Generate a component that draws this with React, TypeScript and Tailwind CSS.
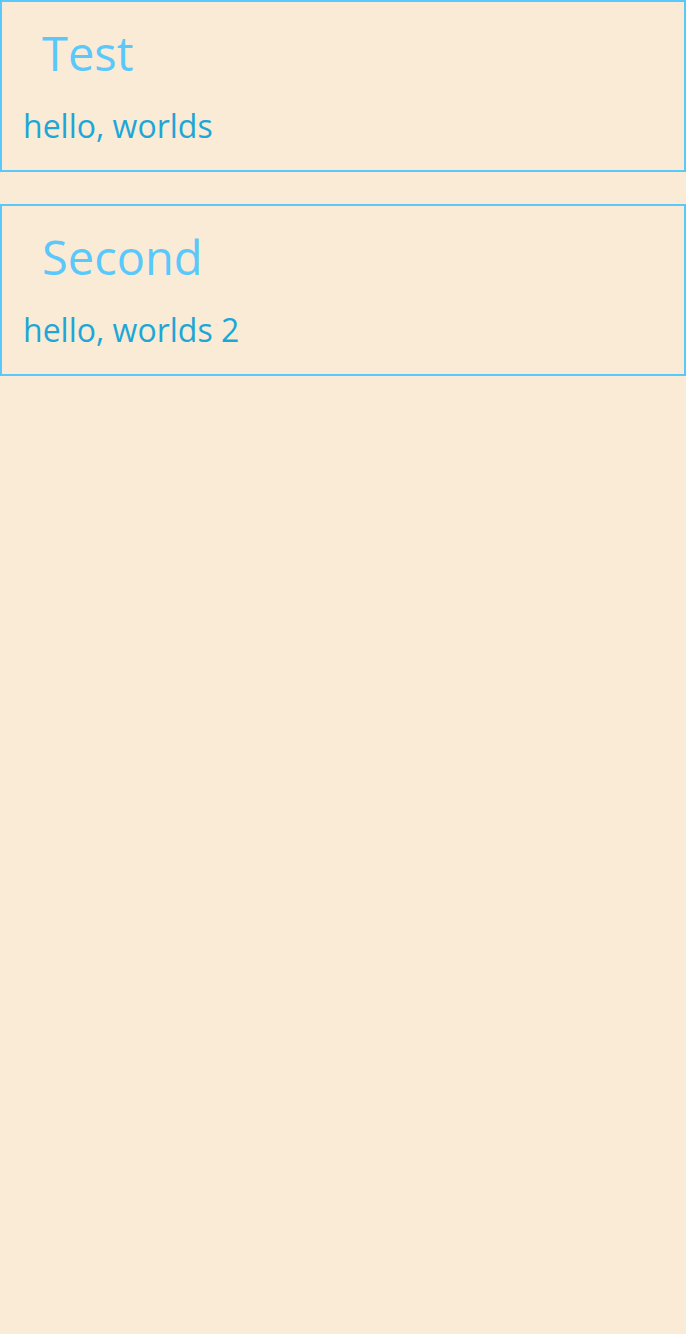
import React from "react";

function Card({ title, body }: { title: string; body: string }) {
  return (
    <div className="border-2 border-[#5ac8fa] h-[172px] pt-[19px] pl-[18px]">
      <div className="ml-[22px] text-[47px] leading-[64px] text-[#5ac8fa]">{title}</div>
      <div className="mt-[19px] ml-[3px] text-[32px] leading-[44px] text-[#1ea7d6]">{body}</div>
    </div>
  );
}

export default function App() {
  return (
    <div
      className="min-h-[1334px] w-[686px] bg-[#faebd7] flex flex-col gap-[32px]"
      style={{ fontFamily: '"Open Sans", sans-serif' }}
    >
      <Card title="Test" body="hello, worlds" />
      <Card title="Second" body="hello, worlds 2" />
    </div>
  );
}
